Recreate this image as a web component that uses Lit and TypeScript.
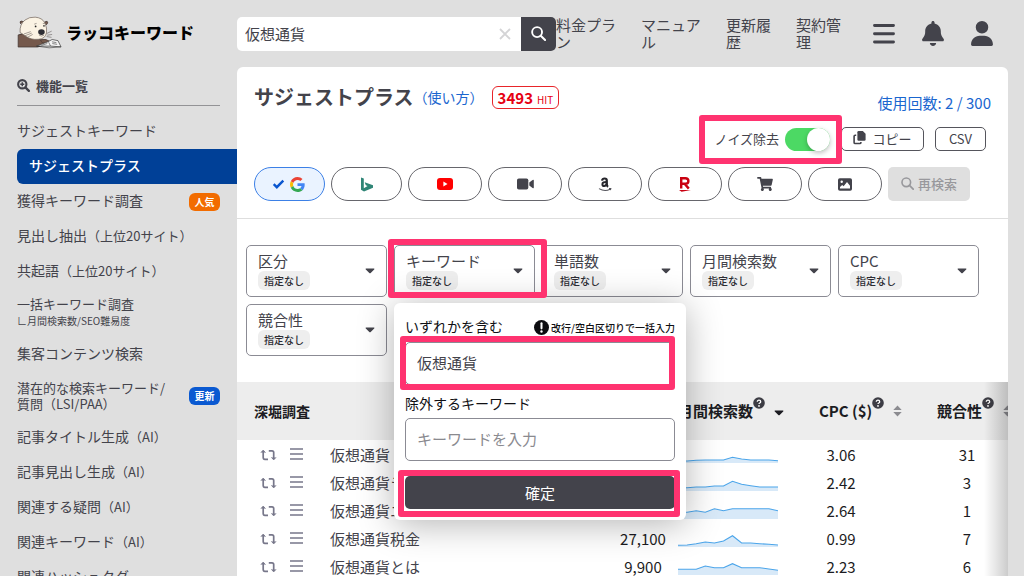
import { LitElement, html, svg, css, nothing } from "lit";
import { customElement, property } from "lit/decorators.js";
import { classMap } from "lit/directives/class-map.js";

interface MenuItem {
  label: string;
  small?: string;
  note?: string;
  second?: string;
  compact?: boolean;
  active?: boolean;
  badge?: string;
  tone?: "hot" | "fresh";
}

const MENU: MenuItem[] = [
  { label: "サジェストキーワード" },
  { label: "サジェストプラス", active: true },
  { label: "獲得キーワード調査", badge: "人気", tone: "hot" },
  { label: "見出し抽出", small: "（上位20サイト）" },
  { label: "共起語", small: "（上位20サイト）" },
  { label: "一括キーワード調査", note: "∟月間検索数/SEO難易度", compact: true },
  { label: "集客コンテンツ検索" },
  { label: "潜在的な検索キーワード/", second: "質問（LSI/PAA）", compact: true, badge: "更新", tone: "fresh" },
  { label: "記事タイトル生成", small: "（AI）" },
  { label: "記事見出し生成", small: "（AI）" },
  { label: "関連する疑問", small: "（AI）" },
  { label: "関連キーワード", small: "（AI）" },
  { label: "関連ハッシュタグ" },
];

const ROWS = [
  { word: "仮想通貨", volume: "301,000", cpc: "3.06", comp: "31", trend: [6, 6, 8, 9, 9, 9, 17, 12, 9, 9, 9, 7] },
  { word: "仮想通貨ランキング", volume: "60,500", cpc: "2.42", comp: "3", trend: [10, 10, 12, 12, 15, 15, 29, 20, 16, 12, 12, 12] },
  { word: "仮想通貨ニュース", volume: "33,100", cpc: "2.64", comp: "1", trend: [20, 20, 25, 20, 31, 25, 31, 31, 31, 31, 31, 25] },
  { word: "仮想通貨税金", volume: "27,100", cpc: "0.99", comp: "7", trend: [5, 6, 10, 15, 12, 18, 34, 12, 12, 10, 8, 6] },
  { word: "仮想通貨とは", volume: "9,900", cpc: "2.23", comp: "6", trend: [17, 17, 17, 27, 22, 22, 34, 22, 22, 22, 18, 14] },
];

const icons = {
  search: html`<svg viewBox="0 0 16 16" aria-hidden="true"><circle cx="6.5" cy="6.5" r="5.3" fill="none" stroke="currentColor" stroke-width="2"/><path d="M10.4 10.4 15 15" stroke="currentColor" stroke-width="2.2" stroke-linecap="round"/></svg>`,
  searchPlus: html`<svg viewBox="0 0 16 16" aria-hidden="true"><circle cx="6.5" cy="6.5" r="5.1" fill="none" stroke="currentColor" stroke-width="2.6"/><path d="M6.5 4v5M4 6.5h5" stroke="currentColor" stroke-width="1.8"/><path d="M10.6 10.6 14.6 14.6" stroke="currentColor" stroke-width="2.8" stroke-linecap="round"/></svg>`,
  bars: html`<svg viewBox="0 0 22 20" aria-hidden="true"><path d="M1.5 1.5h19M1.5 9.7h19M1.5 18h19" stroke="currentColor" stroke-width="2.9" stroke-linecap="round"/></svg>`,
  bell: html`<svg viewBox="0 0 448 512" aria-hidden="true"><path fill="currentColor" d="M224 0c-17.7 0-32 14.3-32 32V51.2C119 66 64 130.6 64 208v18.8c0 47-17.3 92.4-48.5 127.6l-7.4 8.3c-8.4 9.4-10.4 22.9-5.3 34.4S19.4 416 32 416H416c12.6 0 24-7.4 29.2-18.9s3.1-25-5.3-34.4l-7.4-8.3C401.3 319.2 384 273.9 384 226.8V208c0-77.4-55-142-128-156.8V32c0-17.7-14.3-32-32-32zm45.3 493.3c12-12 18.7-28.3 18.7-45.3H224 160c0 17 6.7 33.3 18.7 45.3s28.3 18.7 45.3 18.7s33.3-6.7 45.3-18.7z"/></svg>`,
  user: html`<svg viewBox="0 0 448 512" aria-hidden="true"><path fill="currentColor" d="M224 256A128 128 0 1 0 224 0a128 128 0 1 0 0 256zm-45.7 48C79.8 304 0 383.8 0 482.3C0 498.7 13.3 512 29.7 512H418.3c16.4 0 29.7-13.3 29.7-29.7C448 383.8 368.2 304 269.7 304H178.3z"/></svg>`,
  check: html`<svg class="check" viewBox="0 0 12 10" aria-hidden="true"><path d="M1.2 5.2 4.3 8.2 10.8 1.6" fill="none" stroke="#0a56cf" stroke-width="2.4"/></svg>`,
  google: html`<svg class="g16" viewBox="0 0 48 48" aria-hidden="true"><path fill="#EA4335" d="M24 9.5c3.54 0 6.71 1.22 9.21 3.6l6.85-6.85C35.9 2.38 30.47 0 24 0 14.62 0 6.51 5.38 2.56 13.22l7.98 6.19C12.43 13.72 17.74 9.5 24 9.5z"/><path fill="#4285F4" d="M46.98 24.55c0-1.57-.15-3.09-.38-4.55H24v9.02h12.94c-.58 2.96-2.26 5.48-4.78 7.18l7.73 6c4.51-4.18 7.09-10.36 7.09-17.65z"/><path fill="#FBBC05" d="M10.53 28.59c-.48-1.45-.76-2.99-.76-4.59s.27-3.14.76-4.59l-7.98-6.19C.92 16.46 0 20.12 0 24c0 3.88.92 7.54 2.56 10.78l7.97-6.19z"/><path fill="#34A853" d="M24 48c6.48 0 11.93-2.13 15.89-5.81l-7.73-6c-2.15 1.45-4.92 2.3-8.16 2.3-6.26 0-11.57-4.22-13.47-9.91l-7.98 6.19C6.51 42.62 14.62 48 24 48z"/></svg>`,
  bing: html`<svg class="g14" viewBox="0 0 14 14" aria-hidden="true"><path fill="#2f8576" d="M1 0 3.8 1V10.8L7.6 8.6 5.8 7.7 4.7 4.8 13 7.7V10.3L4 14 1 12.3z"/></svg>`,
  youtube: html`<svg class="w16" viewBox="0 0 16 12" aria-hidden="true"><rect width="16" height="12" rx="3" fill="#ff0000"/><path d="M6.4 3.6 10.5 6 6.4 8.4z" fill="#fff"/></svg>`,
  video: html`<svg class="w17" viewBox="0 0 17 12" aria-hidden="true"><rect y="0.5" width="11.3" height="11" rx="1.8" fill="currentColor"/><path d="M12.3 4.6 15.6 1.9Q16.8 1.2 16.8 2.4V9.6Q16.8 10.8 15.6 10.1L12.3 7.4z" fill="currentColor"/></svg>`,
  amazon: html`<svg class="g14" viewBox="0 0 14 15" aria-hidden="true"><path fill="none" stroke="#26262c" stroke-width="2.2" d="M4 3.6Q4.4 1.5 6.6 1.5T8.8 3.7V7.6Q8.8 8.8 10 9.8"/><path fill="none" stroke="#26262c" stroke-width="2" d="M8.8 4.9Q4.4 4.8 4.4 7.3 4.4 9.1 6 9.1 8.2 9 8.8 6.6"/><path fill="none" stroke="#55555c" stroke-width="1.1" d="M1 11.6Q6.8 15 12 12.2M11 11.6H12.8L12.4 13.2"/></svg>`,
  rakuten: html`<svg class="g14" viewBox="0 0 14 15" aria-hidden="true"><path fill="none" stroke="#c90010" stroke-width="2.4" d="M3.2 11.6V1.2H7.4Q10.4 1.2 10.4 4T7.4 6.8H3.2M6.6 6.8 10.8 11.6"/><path fill="#c90010" d="M1 12.9H13L3.6 14.8z"/></svg>`,
  cart: html`<svg class="w16" viewBox="0 0 576 512" aria-hidden="true"><path fill="currentColor" d="M528.12 301.319l47.273-208C578.806 78.301 567.391 64 551.99 64H159.208l-9.166-44.81C147.758 8.021 137.93 0 126.529 0H24C10.745 0 0 10.745 0 24v16c0 13.255 10.745 24 24 24h69.883l70.248 343.435C147.325 417.1 136 435.222 136 456c0 30.928 25.072 56 56 56s56-25.072 56-56c0-15.674-6.447-29.835-16.824-40h209.647C430.447 426.165 424 440.326 424 456c0 30.928 25.072 56 56 56s56-25.072 56-56c0-22.172-12.888-41.332-31.579-50.405l5.517-24.276c3.413-15.018-8.002-29.319-23.403-29.319H218.117l-6.545-32h293.145c11.206 0 20.92-7.754 23.403-18.681z"/></svg>`,
  image: html`<svg class="g14" viewBox="0 0 14 14" aria-hidden="true"><rect y="0.8" width="14" height="12.4" rx="1.8" fill="currentColor"/><circle cx="3.7" cy="4.3" r="1.2" fill="#fff"/><path d="M2 11V9.6L4.2 7.4 5.6 8.7 9 4.6 12 8.2V11z" fill="#fff"/></svg>`,
  copy: html`<svg class="g13" viewBox="0 0 13 14" aria-hidden="true"><path d="M5.6 0H9.8L12.6 2.8V8.6Q12.6 9.8 11.4 9.8H5.6Q4.4 9.8 4.4 8.6V1.2Q4.4 0 5.6 0z" fill="currentColor"/><path d="M3.2 4.2H2.2Q1.1 4.2 1.1 5.3V11.4Q1.1 12.5 2.2 12.5H6.8Q7.9 12.5 7.9 11.4V11" fill="none" stroke="currentColor" stroke-width="1.6"/></svg>`,
  retweet: html`<svg class="retweet" viewBox="0 0 17 12" aria-hidden="true"><path d="M3.2 3V8.6Q3.2 10.3 4.9 10.3H8M8.8 1.8H12Q13.7 1.8 13.7 3.5V9" fill="none" stroke="currentColor" stroke-width="1.7"/><path d="M0.9 3.6 3.2 1.1 5.5 3.6M11.4 8.4 13.7 10.9 16 8.4" fill="currentColor" stroke="currentColor" stroke-width="0.8"/></svg>`,
  list: html`<svg class="list" viewBox="0 0 13 12" aria-hidden="true"><path d="M0 1h13M0 6h13M0 11h13" stroke="currentColor" stroke-width="1.5"/></svg>`,
  caret: html`<svg class="caret" viewBox="0 0 10 6" aria-hidden="true"><path d="M0.9 0.4H9.1Q9.8 0.9 9.2 1.5L5.7 5Q5 5.6 4.3 5L0.8 1.5Q0.2 0.9 0.9 0.4z" fill="currentColor"/></svg>`,
  sort: html`<svg class="sort" viewBox="0 0 9 12" aria-hidden="true"><path d="M4.5 0.4 8.7 5H0.3zM4.5 11.6 8.7 7H0.3z" fill="#8b8b90"/></svg>`,
  help: html`<svg class="help" viewBox="0 0 12 12" aria-hidden="true"><circle cx="6" cy="6" r="5.8" fill="#3c3c44"/><path d="M4.3 4.8Q4.3 3.2 6 3.2T7.7 4.7Q7.7 5.6 6.7 6 6 6.3 6 7.1" fill="none" stroke="#fff" stroke-width="1.3"/><circle cx="6" cy="8.9" r="0.9" fill="#fff"/></svg>`,
  alert: html`<svg class="alert" viewBox="0 0 14 14" aria-hidden="true"><circle cx="7" cy="7" r="7" fill="#0c0c10"/><path d="M7 3v4.8" stroke="#fff" stroke-width="1.9" stroke-linecap="round"/><circle cx="7" cy="10.7" r="1.1" fill="#fff"/></svg>`,
  clear: html`<svg class="clear-mark" viewBox="0 0 12 12" aria-hidden="true"><path d="M1 1 11 11M11 1 1 11" stroke="#d4d4d6" stroke-width="1.8"/></svg>`,
  otter: html`<svg class="otter" viewBox="0 0 46 34" aria-hidden="true">
    <path d="M1 19.5Q6 17 11 20 18 25 30 24.5L33 28 21 32H1z" fill="#75594c" stroke="#3a302c" stroke-width="0.7"/>
    <path d="M3.6 8.2Q2 5.4 4.2 5.2L7 6M28 6.4Q32 4.2 31.4 7.4L29.8 9.4" fill="#75594c" stroke="#3a302c" stroke-width="0.7"/>
    <path d="M3 17Q2.4 8.6 8 4.2 12.4 0.8 18.6 1.2 25.8 1.8 28.6 7.2 31 12.4 30.2 17.4 29 23.6 21.8 24 14 24.8 8.4 20.6 4.4 17.6 3 17z" fill="#fbf3e4" stroke="#6b5e55" stroke-width="0.7"/>
    <ellipse cx="25" cy="16.6" rx="3.4" ry="2.9" fill="#2e2e34"/>
    <circle cx="19" cy="10.8" r="0.9" fill="#222"/><circle cx="27.6" cy="10.2" r="0.8" fill="#222"/>
    <path d="M17.6 8.4l2.4-.8M26.4 7.6l2 .2M22.4 19.6Q24.8 21.6 27.8 19.8M7 18.5l7-2.4M8 20.4l7-2.8M10.5 22l5.5-3M30.5 18l5-2.4M31 19.8l5-.8M30.4 21.2l5 .8" fill="none" stroke="#4a4340" stroke-width="0.5"/>
    <path d="M24 24.6Q29 23.2 33 25.6L31 28.4 25.6 27.4z" fill="#75594c" stroke="#3a302c" stroke-width="0.5"/>
    <path d="M20 31 31.6 26.6 36 24.2 42 25.4 45.2 31.8 34.4 31z" fill="#f5f5f5" stroke="#333" stroke-width="0.7"/>
    <path d="M20 31 33 32.8 45.2 31.8M34.4 31 32.4 27M35.8 26.6l4.6.8M36.2 28.4l5 .8M25 30.2l6-1.8" fill="none" stroke="#333" stroke-width="0.6"/>
  </svg>`,
};

const base = css`
  :host {
    font-family: "Noto Sans CJK JP", "Noto Sans", sans-serif;
    color: #43434b;
  }
  *, *::before, *::after { box-sizing: border-box; }
  button, input { font: inherit; color: inherit; margin: 0; }
  button { padding: 0; border: 0; background: none; cursor: pointer; }
  a { color: inherit; text-decoration: none; }
  svg { display: block; flex: none; }
`;

const frame = css`
  .frame {
    position: absolute;
    border: 6px solid #ff3370;
    border-radius: 3px;
    pointer-events: none;
    z-index: 5;
  }
`;

@customElement("side-menu")
export class SideMenu extends LitElement {
  static styles = [base, css`
    :host { display: block; padding-left: 17px; }
    .brand { display: flex; align-items: center; gap: 4px; height: 67px; padding-bottom: 3px; }
    .otter { width: 45px; height: 33px; }
    .name { font-size: 16px; line-height: 24px; font-weight: 900; color: #000; white-space: nowrap; }
    .heading {
      display: flex; align-items: center; gap: 6px;
      height: 39px; margin: 0 17px 8px 0; padding-bottom: 2px;
      border-bottom: 1px solid #939396;
      font-size: 13px; font-weight: 700;
    }
    .heading svg { width: 13px; height: 13px; }
    ul { list-style: none; margin: 0; padding: 0; }
    .item {
      display: flex; align-items: center; justify-content: space-between;
      height: 35px; padding-right: 17px;
      font-size: 14px; line-height: 20px; white-space: nowrap;
    }
    .label { display: block; padding-bottom: 3px; }
    .small { font-size: 13px; }
    .active {
      padding-left: 12px; border-radius: 6px 0 0 6px;
      background: #004097; color: #fff; font-weight: 500;
    }
    .compact { font-size: 13px; line-height: 16px; height: 48px; }
    .compact .label { padding-bottom: 1px; }
    .line { display: block; }
    .note { display: block; font-size: 10px; line-height: 18px; }
    .badge {
      width: 31px; height: 18px; border-radius: 6px;
      font-size: 10px; line-height: 18px; font-weight: 700;
      text-align: center; color: #fff;
    }
    .hot { background: #f26c00; }
    .fresh { background: #0a59d1; }
  `];

  render() {
    return html`
      <a class="brand" href="#">${icons.otter}<span class="name">ラッコキーワード</span></a>
      <div class="heading">${icons.searchPlus}機能一覧</div>
      <nav><ul>
        ${MENU.map((m) => html`<li>
          <a href="#" class=${classMap({ item: true, active: !!m.active, compact: !!m.compact })}>
            <span class="label">${m.label}${m.small ? html`<span class="small">${m.small}</span>` : nothing}${m.note ? html`<span class="note">${m.note}</span>` : nothing}${m.second ? html`<span class="line">${m.second}</span>` : nothing}</span>
            ${m.badge ? html`<span class=${classMap({ badge: true, hot: m.tone === "hot", fresh: m.tone === "fresh" })}>${m.badge}</span>` : nothing}
          </a></li>`)}
      </ul></nav>`;
  }
}

@customElement("top-bar")
export class TopBar extends LitElement {
  static styles = [base, css`
    :host { display: block; }
    .bar { display: flex; align-items: center; gap: 25px; height: 67px; padding-right: 14px; }
    .lead { display: flex; flex: 1; min-width: 0; align-items: center; }
    .search {
      display: flex; flex: 1; min-width: 0; height: 34px; align-items: center;
      background: #fff; border-radius: 5px; overflow: hidden;
    }
    .query {
      flex: 1; min-width: 0; height: 34px; padding: 0 8px; border: 0; outline: 0;
      background: none; font-size: 15px;
    }
    .clear { padding: 0 10px; }
    .clear-mark { width: 12px; height: 12px; }
    .go { display: grid; place-items: center; width: 35px; height: 34px; background: #43434b; color: #fff; }
    .go svg { width: 15px; height: 15px; }
    .link { padding-bottom: 2px; font-size: 15px; line-height: 17px; word-break: break-all; }
    .wide { width: 60px; }
    .narrow { width: 45px; }
    .tools { display: flex; gap: 25px; margin-left: 6px; }
    .tool { display: grid; place-items: center; width: 24px; height: 26px; }
    .tool svg { width: 22px; height: 25px; }
    .tool:first-child svg { height: 20px; }
  `];

  render() {
    return html`<header class="bar">
      <div class="lead">
        <form class="search" role="search">
          <input class="query" type="text" aria-label="キーワード" .value=${"仮想通貨"}>
          <button class="clear" type="button" aria-label="クリア">${icons.clear}</button>
          <button class="go" type="button" aria-label="検索">${icons.search}</button>
        </form>
        <a class="link wide" href="#">料金プラン</a>
      </div>
      <a class="link wide" href="#">マニュアル</a>
      <a class="link narrow" href="#">更新履歴</a>
      <a class="link narrow" href="#">契約管理</a>
      <div class="tools">
        <button class="tool" aria-label="メニュー">${icons.bars}</button>
        <button class="tool" aria-label="お知らせ">${icons.bell}</button>
        <button class="tool" aria-label="アカウント">${icons.user}</button>
      </div>
    </header>`;
  }
}

@customElement("panel-head")
export class PanelHead extends LitElement {
  static styles = [base, frame, css`
    :host { display: block; border-bottom: 1px solid #dedede; padding: 0 17px 17px; }
    .top { display: flex; align-items: center; height: 60px; }
    h1 { margin: 0; font-size: 20px; line-height: 30px; font-weight: 700; }
    .howto { font-size: 14px; color: #1a66cf; }
    .hits {
      margin-left: 8px; padding: 0 5px; height: 23px; border: 1px solid #e8252a; border-radius: 6px;
      color: #e60012; font-size: 15px; line-height: 21px; font-weight: 700;
    }
    .unit { font-size: 10px; font-weight: 400; margin-left: 4px; }
    .usage { margin: 10px 0 0 auto; font-size: 15px; color: #1a66cf; }
    .tools { display: flex; justify-content: flex-end; gap: 11px; padding-right: 5px; }
    .noise { position: relative; display: flex; align-items: center; gap: 6px; height: 24px; font-size: 13px; }
    .noise label { padding-bottom: 2px; }
    .noise .frame { inset: -12px -12px -13px -15px; }
    .switch {
      appearance: none; position: relative; width: 45px; height: 23px;
      border-radius: 12px; background: #4cd964;
    }
    .switch::before {
      content: ""; position: absolute; top: 0; right: 0; width: 23px; height: 23px;
      border-radius: 50%; background: #fff; box-shadow: 0 2px 5px rgba(0, 0, 0, 0.25);
    }
    .tool {
      display: flex; align-items: center; justify-content: center; gap: 6px;
      height: 24px; padding-bottom: 2px; border: 1px solid #55555c; border-radius: 5px; font-size: 13px;
    }
    .copy { width: 83px; }
    .csv { width: 51px; }
    .g13 { width: 13px; height: 14px; }
    .sources { display: flex; gap: 6px; margin-top: 16px; }
    .source {
      display: flex; align-items: center; justify-content: center; gap: 5px;
      width: 74px; height: 34px; border: 1px solid #66666c; border-radius: 17px; background: #fff;
    }
    .short { width: 71px; }
    .on { padding-right: 3px; border-color: #3c80e6; background: #eaf3ff; }
    .check { width: 13px; height: 10px; }
    .g14 { width: 14px; height: 15px; }
    .g16 { width: 15px; height: 15px; }
    .w16 { width: 16px; height: 14px; }
    .w17 { width: 17px; height: 12px; }
    .again {
      display: flex; align-items: center; justify-content: center; gap: 4px;
      width: 82px; height: 34px; border-radius: 5px; background: #dfdfdf;
      padding-bottom: 1px; font-size: 13px; font-weight: 500; color: #98989c;
    }
    .again svg { width: 13px; height: 13px; }
  `];

  private source(label: string, icon: unknown, kind = "") {
    return html`<button class=${"source " + kind} aria-label=${label}>${icon}</button>`;
  }

  render() {
    return html`
      <div class="top">
        <h1>サジェストプラス</h1>
        <a class="howto" href="#">（使い方）</a>
        <span class="hits">3493<span class="unit">HIT</span></span>
        <a class="usage" href="#">使用回数: 2 / 300</a>
      </div>
      <div class="tools">
        <div class="noise">
          <label for="noise">ノイズ除去</label>
          <input class="switch" id="noise" type="checkbox" role="switch" checked>
          <span class="frame"></span>
        </div>
        <button class="tool copy">${icons.copy}コピー</button>
        <button class="tool csv">CSV</button>
      </div>
      <div class="sources">
        ${this.source("Google", html`${icons.check}${icons.google}`, "short on")}
        ${this.source("Bing", icons.bing, "short")}
        ${this.source("YouTube", icons.youtube)}
        ${this.source("動画", icons.video)}
        ${this.source("Amazon", icons.amazon)}
        ${this.source("楽天", icons.rakuten)}
        ${this.source("ショッピング", icons.cart)}
        ${this.source("画像", icons.image)}
        <button class="again" disabled>${icons.search}再検索</button>
      </div>`;
  }
}

@customElement("filter-box")
export class FilterBox extends LitElement {
  @property() label = "";

  static styles = [base, css`
    :host { display: block; }
    .box {
      display: flex; align-items: center; justify-content: space-between;
      width: 100%; height: 52px; padding: 0 11px; text-align: left;
      border: 1px solid #8b8b94; border-radius: 5px; background: #fff;
    }
    .text { display: grid; justify-items: start; padding-bottom: 2px; }
    .label { font-size: 15px; line-height: 20px; }
    .value {
      padding: 0 6px; border-radius: 6px; background: #eeeeee; color: #2c2c33;
      font-size: 10px; line-height: 19px; font-weight: 500;
    }
    .caret { width: 10px; height: 6px; }
  `];

  render() {
    return html`<button class="box" aria-haspopup="dialog">
      <span class="text"><span class="label">${this.label}</span><span class="value">指定なし</span></span>
      ${icons.caret}
    </button>`;
  }
}

@customElement("keyword-popover")
export class KeywordPopover extends LitElement {
  static styles = [base, frame, css`
    :host {
      display: block; padding: 12px 11px 11px; border-radius: 6px; background: #fff;
      box-shadow: 0 4px 36px rgba(0, 0, 0, 0.3);
    }
    .line { display: flex; align-items: center; justify-content: space-between; height: 27px; padding-bottom: 6px; color: #101014; }
    label { font-size: 14px; line-height: 22px; }
    .hint { display: flex; align-items: center; gap: 2px; padding-top: 4px; font-size: 10px; font-weight: 500; white-space: nowrap; }
    .alert { width: 15px; height: 15px; }
    .holder { position: relative; }
    .field {
      display: block; width: 100%; height: 43px; padding: 0 11px 3px; outline: 0;
      border: 1px solid #8b8b94; border-radius: 5px; background: #fff; font-size: 15px;
    }
    .field::placeholder { color: #8a8a8f; opacity: 1; }
    .holder .frame { inset: -6px 0 -5px -5px; }
    .second { height: 33px; padding: 3px 0 0; }
    .action { position: relative; margin-top: 15px; }
    .ok { display: block; width: 100%; height: 33px; border-radius: 5px; background: #43434b; color: #fff; font-size: 15px; }
    .action .frame { inset: -6px -5px -8px -7px; }
  `];

  render() {
    return html`
      <div class="line"><label for="include">いずれかを含む</label><span class="hint">${icons.alert}改行/空白区切りで一括入力</span></div>
      <div class="holder"><input class="field" id="include" type="text" .value=${"仮想通貨"}><span class="frame"></span></div>
      <div class="line second"><label for="exclude">除外するキーワード</label></div>
      <input class="field" id="exclude" type="text" placeholder="キーワードを入力">
      <div class="action"><button class="ok">確定</button><span class="frame"></span></div>`;
  }
}

@customElement("trend-line")
export class TrendLine extends LitElement {
  @property({ attribute: false }) values: number[] = [];

  static styles = css`
    :host { display: block; }
    svg { display: block; width: 100px; height: 14px; }
  `;

  render() {
    const pts = this.values.map((v, i) => `${((i * 100) / (this.values.length - 1)).toFixed(1)},${(14 - v / 3).toFixed(1)}`).join(" ");
    return html`<svg viewBox="0 0 100 14" aria-hidden="true">
      ${svg`<polygon points="0,14 ${pts} 100,14" fill="#d8e9f8"/><polyline points=${pts} fill="none" stroke="#4ba5ea" stroke-width="1.1"/>`}
    </svg>`;
  }
}

@customElement("result-table")
export class ResultTable extends LitElement {
  static styles = [base, css`
    :host { display: block; position: relative; overflow: hidden; }
    :host::after {
      content: ""; position: absolute; inset: 0 0 0 auto; width: 24px;
      background: linear-gradient(to right, rgba(0, 0, 0, 0), rgba(0, 0, 0, 0.2));
    }
    table { width: 100%; min-width: 794px; table-layout: fixed; border-collapse: collapse; font-size: 15px; line-height: 22px; }
    .c-dig { width: 93px; }
    .c-vol { width: 68px; }
    .c-trend { width: 102px; }
    .c-cpc { width: 124px; }
    .c-comp { width: 128px; }
    th { height: 58px; padding: 0; background: #ededed; color: #1c1c22; font-size: 15px; font-weight: 700; text-align: left; white-space: nowrap; }
    .h-dig { padding-left: 17px; font-size: 14px; }
    .h-vol { padding-left: 69px; }
    .h-cpc { padding-left: 40px; }
    .h-comp { padding-left: 34px; }
    .head { display: flex; align-items: center; }
    .help { width: 12px; height: 12px; margin: 0 9px 16px 0; }
    .caret { width: 10px; height: 6px; margin-top: 4px; }
    .sort { width: 9px; height: 12px; }
    td { height: 28px; padding: 2px 0 0; }
    .num { text-align: center; color: #1c1c22; }
    .word { white-space: nowrap; }
    .acts { display: flex; align-items: center; gap: 13px; padding-left: 23px; color: #77778a; }
    .retweet { width: 17px; height: 12px; }
    .list { width: 13px; height: 12px; margin-bottom: 2px; }
    trend-line { padding: 2px 0 0 1px; }
  `];

  render() {
    return html`<table>
      <colgroup><col class="c-dig"><col><col class="c-vol"><col class="c-trend"><col class="c-cpc"><col class="c-comp"></colgroup>
      <thead><tr>
        <th class="h-dig" colspan="2">深堀調査</th>
        <th class="h-vol" colspan="2"><span class="head">月間検索数${icons.help}${icons.caret}</span></th>
        <th class="h-cpc"><span class="head">CPC ($)${icons.help}${icons.sort}</span></th>
        <th class="h-comp"><span class="head">競合性${icons.help}${icons.sort}</span></th>
      </tr></thead>
      <tbody>
        ${ROWS.map((r) => html`<tr>
          <td><span class="acts"><button aria-label="再調査">${icons.retweet}</button><button aria-label="一覧">${icons.list}</button></span></td>
          <td class="word">${r.word}</td>
          <td class="num">${r.volume}</td>
          <td><trend-line .values=${r.trend}></trend-line></td>
          <td class="num">${r.cpc}</td>
          <td class="num">${r.comp}</td>
        </tr>`)}
      </tbody>
    </table>`;
  }
}

@customElement("app-root")
export class AppRoot extends LitElement {
  static styles = [base, frame, css`
    :host { display: block; height: 100vh; overflow: hidden; background: #dfdfdf; }
    .layout { display: grid; grid-template-columns: 237px minmax(0, 1fr); height: 100%; }
    .content { padding-right: 16px; min-width: 0; }
    .panel { min-height: 100%; background: #fff; border-radius: 6px 6px 0 0; }
    .filters { display: flex; flex-wrap: wrap; gap: 7px; padding: 26px 9px; }
    .slot { position: relative; width: 141px; }
    .slot keyword-popover { position: absolute; top: 58px; left: 0; width: 292px; z-index: 4; }
    .slot .frame { inset: -6px -12px -1px -6px; }
  `];

  render() {
    return html`<div class="layout">
      <side-menu></side-menu>
      <div class="content">
        <top-bar></top-bar>
        <main class="panel">
          <panel-head></panel-head>
          <div class="filters">
            ${["区分", "キーワード", "単語数", "月間検索数", "CPC", "競合性"].map((f) => html`<div class="slot">
              <filter-box label=${f}></filter-box>
              ${f === "キーワード" ? html`<keyword-popover></keyword-popover><span class="frame"></span>` : nothing}
            </div>`)}
          </div>
          <result-table></result-table>
        </main>
      </div>
    </div>`;
  }
}
